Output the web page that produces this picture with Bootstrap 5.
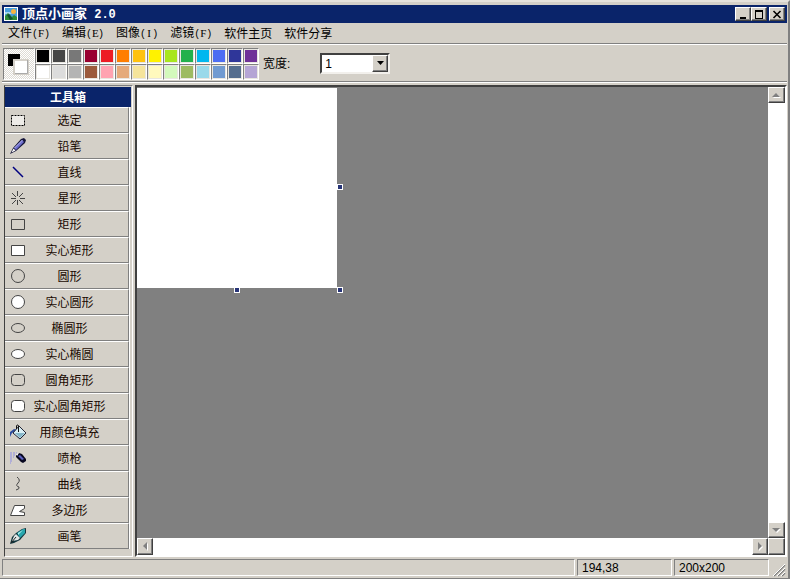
<!DOCTYPE html>
<html lang="zh-CN">
<head>
<meta charset="utf-8">
<meta name="viewport" content="width=device-width, initial-scale=1">
<title>顶点小画家 2.0</title>
<link href="https://cdn.jsdelivr.net/npm/bootstrap@5.3.0/dist/css/bootstrap.min.css" rel="stylesheet">
<style>
:root{--face:#d4d0c8;--navy:#0a246a;--dark:#808080;--deep:#404040}
body{font:12px/16px "Liberation Sans","Noto Sans CJK SC",sans-serif;color:#000;background:var(--face)}
button,select{font:inherit;color:inherit;border-radius:0}
.window{min-height:100vh;padding:3px 1px 1px 2px;border-top:2px solid #e6e3dc;border-right:2px solid #808080;border-bottom:1px solid #808080;background:var(--face)}
.titlebar{height:18px;background:var(--navy);color:#fff;padding:0 2px}
.titlebar h1{font:bold 13px/18px "Noto Sans CJK SC",sans-serif;margin:0 0 0 4px}
.titlebar h1 span{font:bold 12px/18px "Liberation Mono",monospace;white-space:pre}
.raised{background:var(--face);border:1px solid;border-color:#fff var(--deep) var(--deep) #fff;box-shadow:inset -1px -1px 0 var(--dark);padding:0;display:flex;align-items:center;justify-content:center}
.caption-btn{width:16px;height:14px}
.caption-close{margin-left:2px}
.menubar{height:20px;padding:0 6px;gap:12px;background:var(--face)}
.menubar button{border:0;background:none;padding:0;font-family:"Noto Sans CJK SC",sans-serif;line-height:18px;white-space:nowrap}
.menubar span{font:10px/18px "Liberation Mono",monospace}
.menubar b{display:inline-block;width:6px;font:11px/18px "Liberation Serif",serif;text-align:center}
.toolbar{border-top:1px solid var(--dark);border-bottom:1px solid var(--dark);box-shadow:inset 0 1px 0 #fff,0 1px 0 #fff;height:39px;padding:4px 1px 2px}
.current{width:32px;height:32px;border:1px solid;border-color:var(--dark) #fff #fff var(--dark);background:repeating-conic-gradient(#fff 0 25%,#dedbd4 0 50%) 0 0/2px 2px}
.palette{display:grid;grid-template-columns:repeat(14,16px);grid-auto-rows:16px}
.swatch{border:1px solid;border-color:var(--dark) #fff #fff var(--dark);padding:0;outline:1px solid #e8e6e0;outline-offset:-2px}
.picker{position:relative;width:70px;margin-left:30px}
.picker select{appearance:none;width:70px;height:21px;border:2px solid;border-color:var(--deep) #f2f0ec #f2f0ec var(--deep);background:#fff;padding:0 3px;line-height:16px;display:block;outline:0}
.picker .raised{position:absolute;right:2px;top:2px;width:16px;height:17px;pointer-events:none}
.workarea{padding:3px 0 1px 2px;min-height:0}
.toolbox{width:129px;border:1px solid;border-color:var(--dark) #fff #fff var(--deep);margin-right:2px;padding:1px 1px 0 0}
.toolbox h2{font:bold 12px/20px "Noto Sans CJK SC",sans-serif;color:#fff;background:var(--navy);margin:0;text-align:center}
.tool-list{border-right:1px solid #fff;margin-right:1px}
.tool{height:26px;width:100%;border:0;border-top:1px solid #fff;border-bottom:1px solid var(--dark);border-right:1px solid var(--dark);background:var(--face);padding:0 0 0 4px;color:#180800;font-family:"Noto Sans CJK SC",sans-serif}
.tool svg{width:18px;height:18px;flex:none}
.tool span{flex:1;padding-right:16px;white-space:nowrap}
.workspace{display:grid;grid-template:minmax(0,1fr) 17px/minmax(0,1fr) 17px;border:2px solid;border-color:var(--deep) #fff #fff var(--deep);min-width:0}
.stage{background:#808080;overflow:hidden;min-height:0;padding-top:1px}
.paper{position:relative;width:200px;height:200px;background:#fff}
.handle{position:absolute;width:6px;height:6px;background:#273477;border:1px solid #fff}
.h-e{left:200px;top:96px}.h-s{left:97px;top:199px}.h-se{left:200px;top:199px}
.track{background:#fff}
.track .raised{width:17px;height:16px;flex:none}
.track.across .raised{width:16px;height:17px}
.statusbar{height:18px;gap:2px;line-height:16px;margin-top:1px}
.pane{border:1px solid;border-color:var(--dark) #fff #fff var(--dark);height:17px;padding:0 4px}
.pane-fixed{width:95px;flex:none}
</style>
<script src="https://cdn.jsdelivr.net/npm/bootstrap@5.3.0/dist/js/bootstrap.bundle.min.js"></script>
</head>
<body>
<div class="window d-flex flex-column vh-100">
<header class="titlebar d-flex align-items-center">
<svg width="14" height="14" viewBox="0 0 14 14" aria-hidden="true"><path fill="#fff" d="M0 0h14v14H0z"/><path fill="#4a9fdd" d="M1 1h12v12H1z"/><path fill="#a9d6f2" d="M1 5h5l2 2H1z"/><circle cx="9.500" cy="4.500" r="2.500" fill="#f9b340"/><path fill="#2f8a38" d="M1 9l3-3 4 4 2-2 3 2v3H1z"/><path fill="#115030" d="M3 8l2-1 4 5-3 1z"/></svg>
<h1>顶点小画家<span> 2.0</span></h1>
<div class="d-flex ms-auto">
<button class="raised caption-btn" aria-label="最小化"><svg width="12" height="11"><path d="M3 8h6v2H3z"/></svg></button>
<button class="raised caption-btn" aria-label="最大化"><svg width="12" height="11"><path d="M2 2.500h8M2.500 2v8M9.500 2v8M2 9.500h8" stroke="#000"/><path d="M2 1h8v2H2z"/></svg></button>
<button class="raised caption-btn caption-close" aria-label="关闭"><svg width="12" height="11"><path d="M2.500 2l7 7m0-7l-7 7" stroke="#000" stroke-width="1.600"/></svg></button>
</div>
</header>
<nav class="menubar d-flex align-items-center flex-shrink-0" aria-label="菜单">
<button>文件<span>(<b>F</b>)</span></button><button>编辑<span>(<b>E</b>)</span></button><button>图像<span>(<b>I</b>)</span></button><button>滤镜<span>(<b>F</b>)</span></button><button>软件主页</button><button>软件分享</button>
</nav>
<div class="toolbar d-flex align-items-start flex-shrink-0">
<div class="current"><svg width="30" height="30" aria-hidden="true"><path d="M4 5h12v12H4z"/><path fill="#d4d0c8" d="M9 10h16v16H9z"/><path fill="#fff" d="M11 12h12v12H11z"/><path d="M23.500 11v13.500H11" fill="none" stroke="#aaa"/></svg></div>
<div class="palette" id="palette"></div>
<label class="ms-1 align-self-center" for="stroke-width">宽度:</label>
<div class="picker align-self-center"><select id="stroke-width"><option>1</option><option>2</option><option>3</option></select><span class="raised"><svg width="9" height="5"><path d="M1 0h7L4.500 4z"/></svg></span></div>
</div>
<main class="workarea d-flex flex-fill">
<aside class="toolbox flex-shrink-0 overflow-hidden">
<h2>工具箱</h2>
<div class="tool-list">
<button class="tool d-flex align-items-center"><svg viewBox="0 0 18 18"><path d="M3 4h12v10H3z" fill="#eeece8"/><path d="M2.500 4.500h13v10h-13z" fill="none" stroke="#000" stroke-dasharray="2 1"/></svg><span>选定</span></button>
<button class="tool d-flex align-items-center"><svg viewBox="0 0 18 18"><path d="M1 17l3-6 8-9 3-1 2 2-1 3-9 8z" fill="#15153a"/><path d="M5 11l8-8 2 2-8 8z" fill="#6d6dcc"/><path d="M5.500 11l8-8" stroke="#b8b8f4"/><path d="M2.500 15.500l2-4 2 2z" fill="#fff"/></svg><span>铅笔</span></button>
<button class="tool d-flex align-items-center"><svg viewBox="0 0 18 18"><path d="M4 4l10 10" stroke="#000080" stroke-width="1.500"/></svg><span>直线</span></button>
<button class="tool d-flex align-items-center"><svg viewBox="0 0 18 18"><path d="M8.500 2v5M8.500 11v5M2 9.500h5m4 0h5M3 4l4 4m3 3l4 4M14 4l-4 4m-3 3l-4 4" stroke="#444"/></svg><span>星形</span></button>
<button class="tool d-flex align-items-center"><svg viewBox="0 0 18 18"><path d="M2.500 4.500h13v10h-13z" fill="none" stroke="#444"/></svg><span>矩形</span></button>
<button class="tool d-flex align-items-center"><svg viewBox="0 0 18 18"><path d="M2.500 4.500h13v10h-13z" fill="#fff" stroke="#444"/></svg><span>实心矩形</span></button>
<button class="tool d-flex align-items-center"><svg viewBox="0 0 18 18"><circle cx="9" cy="9" r="6.500" fill="none" stroke="#444"/></svg><span>圆形</span></button>
<button class="tool d-flex align-items-center"><svg viewBox="0 0 18 18"><circle cx="9" cy="9" r="6.500" fill="#fff" stroke="#444"/></svg><span>实心圆形</span></button>
<button class="tool d-flex align-items-center"><svg viewBox="0 0 18 18"><ellipse cx="9" cy="9" rx="6.500" ry="4.500" fill="none" stroke="#444"/></svg><span>椭圆形</span></button>
<button class="tool d-flex align-items-center"><svg viewBox="0 0 18 18"><ellipse cx="9" cy="9" rx="6.500" ry="4.500" fill="#fff" stroke="#444"/></svg><span>实心椭圆</span></button>
<button class="tool d-flex align-items-center"><svg viewBox="0 0 18 18"><rect x="2.500" y="3.500" width="13" height="11" rx="3" fill="none" stroke="#444"/></svg><span>圆角矩形</span></button>
<button class="tool d-flex align-items-center"><svg viewBox="0 0 18 18"><rect x="2.500" y="3.500" width="13" height="11" rx="3" fill="#fff" stroke="#444"/></svg><span>实心圆角矩形</span></button>
<button class="tool d-flex align-items-center"><svg viewBox="0 0 18 18"><path d="M1 14V9l4-3 3 1-5 3z" fill="#2c4b9e"/><path d="M4 10l6-7 7 7-6 6z" fill="#d8eef4" stroke="#223"/><path d="M6 10l5 5 5-5z" fill="#87b7c9"/><path d="M9.500 9V2.500Q8 1 7.500 3v3" fill="none" stroke="#111"/></svg><span>用颜色填充</span></button>
<button class="tool d-flex align-items-center"><svg viewBox="0 0 18 18"><path d="M1 4h7M1 6h5M1 8h4M1 10h3M1 12h2M1 14h1" stroke="#8d8de6" stroke-dasharray="2 1"/><path d="M7 6l3-2 3 1 4 5v2l-3 2-2-1-5-5z" fill="#080820"/><path d="M11 6l4 4-2 1-4-4z" fill="#5c60c0"/><path d="M7 5l3-1-2 3z" fill="#fff"/></svg><span>喷枪</span></button>
<button class="tool d-flex align-items-center"><svg viewBox="0 0 18 18"><path d="M8 2q4 3 1 6t1 4q1 2-3 3" fill="none" stroke="#444"/></svg><span>曲线</span></button>
<button class="tool d-flex align-items-center"><svg viewBox="0 0 18 18"><path d="M1.500 14.500l4-10h10v3l-5 3 5 1v3z" fill="#fff" stroke="#444"/></svg><span>多边形</span></button>
<button class="tool d-flex align-items-center"><svg viewBox="0 0 18 18"><path d="M1 17l2-7 4-4 6-4 4-1v5l-6 7-6 3z" fill="#12343c"/><path d="M8 6l6-4h2v4l-5 5z" fill="#28a6ad"/><path d="M9 6l5-3-5 5z" fill="#b5f3f1"/><path d="M3 14l2-5 2-2 4 4-2 2z" fill="#dfe6e6"/><path d="M2 16l5-6" stroke="#222"/></svg><span>画笔</span></button>
</div>
</aside>
<section class="workspace flex-fill" aria-label="画布">
<div class="stage"><div class="paper"><i class="handle h-e"></i><i class="handle h-s"></i><i class="handle h-se"></i></div></div>
<div class="track d-flex flex-column justify-content-between"><button class="raised" aria-label="向上"><svg width="9" height="5"><path d="M1 5h8L5 1z" fill="#fff"/><path d="M0 4h8L4 0z" fill="#808080"/></svg></button><button class="raised" aria-label="向下"><svg width="9" height="5"><path d="M1 1h8L5 5z" fill="#fff"/><path d="M0 0h8L4 4z" fill="#808080"/></svg></button></div>
<div class="track across d-flex justify-content-between"><button class="raised" aria-label="向左"><svg width="5" height="9"><path d="M5 1v8L1 5z" fill="#fff"/><path d="M4 0v8L0 4z" fill="#808080"/></svg></button><button class="raised" aria-label="向右"><svg width="5" height="9"><path d="M1 1v8l4-4z" fill="#fff"/><path d="M0 0v8l4-4z" fill="#808080"/></svg></button></div>
<div class="raised"></div>
</section>
</main>
<footer class="statusbar d-flex flex-shrink-0">
<div class="pane flex-fill"></div><div class="pane pane-fixed">194,38</div><div class="pane pane-fixed">200x200</div>
<svg class="align-self-end flex-shrink-0" width="16" height="14" aria-hidden="true"><path d="M3 13L14 2M7 13l7-7m-3 7l3-3" stroke="#808080" stroke-width="1.500"/><path d="M2 13L14 1M6 13l8-8m-4 8l4-4" stroke="#fff"/></svg>
</footer>
</div>
<script>
const colors = ['#000000','#464646','#787878','#990030','#ed1c24','#ff7e00','#ffc20e','#fff200','#a8e61d','#22b14c','#00b7ef','#4d6df3','#2f3699','#6f3198','#ffffff','#dcdcdc','#b4b4b4','#9c5a3c','#ffa3b1','#e5aa7a','#f5e49c','#fff9bd','#d3f9bc','#9dbb61','#99d9ea','#709ad1','#546d8e','#b5a5d5'];
for (const color of colors) {
  const swatch = document.createElement('button');
  swatch.className = 'swatch';
  swatch.style.backgroundColor = color;
  swatch.setAttribute('aria-label', color);
  document.getElementById('palette').append(swatch);
}
</script>
</body>
</html>
